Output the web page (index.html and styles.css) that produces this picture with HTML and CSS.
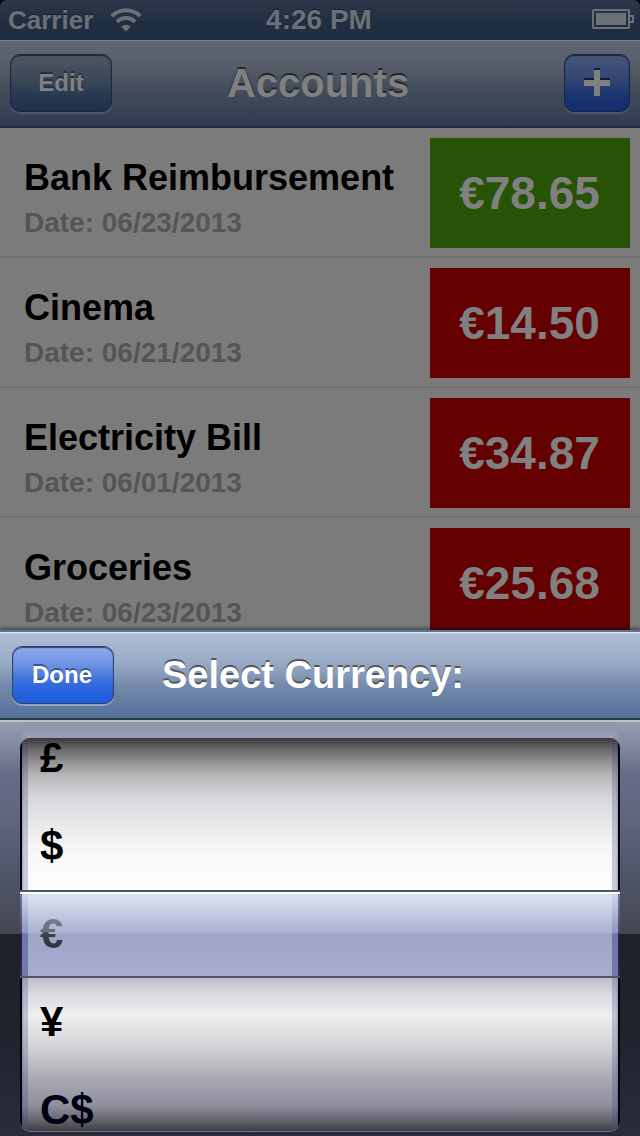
FILE: index.html
```html
<!DOCTYPE html>
<html lang="en">
<head>
    <meta charset="UTF-8">
    <meta name="viewport" content="width=device-width, initial-scale=1.0">
    <title>Accounts</title>
    <link rel="stylesheet" href="styles.css">
</head>
<body>
    <div class="screen">
        <div class="statusbar">
            <div class="carrier">
                <span>Carrier</span>
                <svg class="wifi" width="32" height="24" viewBox="0 0 32 24">
                    <path d="M1.8 8.2a20 20 0 0 1 28.4 0" fill="none" stroke="#6b7178" stroke-width="4"/>
                    <path d="M7 13.8a12.7 12.7 0 0 1 18 0" fill="none" stroke="#6b7178" stroke-width="4"/>
                    <path d="M16 23.5l-4.6-4.8a6.5 6.5 0 0 1 9.2 0z" fill="#6b7178"/>
                </svg>
            </div>
            <div class="time">4:26 PM</div>
            <svg class="battery" width="42" height="20" viewBox="0 0 42 20">
                <rect x="1" y="1" width="36" height="18" rx="1" fill="none" stroke="#6b7178" stroke-width="2"/>
                <rect x="4" y="4" width="30" height="12" fill="#6b7178"/>
                <path d="M38 7h3v6h-3" fill="none" stroke="#6b7178" stroke-width="2"/>
            </svg>
        </div>

        <div class="navbar">
            <button class="btn btn-edit">Edit</button>
            <h1>Accounts</h1>
            <button class="btn btn-add">
                <svg width="26" height="30" viewBox="0 0 26 30">
                    <path d="M10 0h6v10h10v6H16v10h-6V16H0v-6h10z" fill="#141c2c"/>
                    <path d="M10 2h6v10h10v6H16v10h-6V18H0v-6h10z" fill="#808080"/>
                </svg>
            </button>
        </div>

        <div class="list">
            <div class="row">
                <div class="info">
                    <div class="name">Bank Reimbursement</div>
                    <div class="date">Date: 06/23/2013</div>
                </div>
                <div class="amount income">€78.65</div>
            </div>
            <div class="row">
                <div class="info">
                    <div class="name">Cinema</div>
                    <div class="date">Date: 06/21/2013</div>
                </div>
                <div class="amount">€14.50</div>
            </div>
            <div class="row">
                <div class="info">
                    <div class="name">Electricity Bill</div>
                    <div class="date">Date: 06/01/2013</div>
                </div>
                <div class="amount">€34.87</div>
            </div>
            <div class="row">
                <div class="info">
                    <div class="name">Groceries</div>
                    <div class="date">Date: 06/23/2013</div>
                </div>
                <div class="amount">€25.68</div>
            </div>
        </div>
    </div>

    <div class="sheet">
        <div class="toolbar">
            <button class="btn btn-done">Done</button>
            <h2>Select Currency:</h2>
        </div>
        <div class="picker">
            <div class="wheel">
                <div class="item">£</div>
                <div class="item">$</div>
                <div class="item selected"><span>€</span></div>
                <div class="item">¥</div>
                <div class="item">C$</div>
            </div>
        </div>
    </div>
</body>
</html>
```
FILE: styles.css
```css
* {
    box-sizing: border-box;
}
body {
    margin: 0;
    width: 640px;
    height: 1136px;
    overflow: hidden;
    background: #000;
    font-family: "Liberation Sans", Arial, sans-serif;
    font-weight: bold;
}
h1, h2 {
    margin: 0;
}

/* dimmed screen behind the sheet */
.screen {
    height: 630px;
    overflow: hidden;
}
.statusbar {
    display: grid;
    grid-template-columns: 1fr auto 1fr;
    align-items: center;
    height: 40px;
    padding: 0 6px 0 8px;
    border-radius: 6px 6px 0 0;
    background: linear-gradient(#2b384a, #1f2d40 60%, #1f2e42);
    color: #6b7178;
    text-shadow: 0 -1px 0 #172231;
}
.carrier {
    display: flex;
    align-items: center;
    gap: 17px;
    font-size: 26px;
}
.time {
    padding-right: 4px;
    font-size: 28px;
    line-height: 40px;
}
.battery {
    justify-self: end;
    margin-bottom: 2px;
}
.navbar {
    display: flex;
    justify-content: space-between;
    align-items: flex-start;
    height: 88px;
    padding: 13px 10px 0;
    border-top: 1px solid #7b7e83;
    border-bottom: 2px solid #1e2b40;
    background: linear-gradient(#626872, #565d69 30%, #434d5b 55%, #2f3c50);
}
.navbar h1 {
    padding-right: 40px;
    margin-left: auto;
    margin-right: auto;
    font-size: 40px;
    line-height: 58px;
    color: #808080;
    text-shadow: 0 -2px 0 #20262f;
}
.btn {
    height: 58px;
    padding: 0;
    border: 1px solid #1e2735;
    border-radius: 10px;
    font: inherit;
    font-size: 24px;
}
.btn-edit {
    width: 102px;
    color: #808080;
    background: linear-gradient(#4e5662, #3a4758 45%, #263750 75%, #1e2f4b);
    text-shadow: 0 -2px 0 #252f3d;
    box-shadow: inset 0 1px 1px #1e2735, 0 2px 0 rgba(255,255,255,0.12);
}
.btn-add {
    display: flex;
    align-items: center;
    justify-content: center;
    width: 66px;
    border-color: #172442;
    background: linear-gradient(#485677, #304674 45%, #183371 75%, #112d70);
    box-shadow: inset 0 1px 1px #172442, 0 2px 0 rgba(255,255,255,0.12);
}

.list {
    background: #7b7b7b;
}
.row {
    display: flex;
    justify-content: space-between;
    height: 130px;
    padding: 10px 10px 0 24px;
    border-bottom: 2px solid #707070;
}
.name {
    padding-top: 19px;
    font-size: 36px;
    line-height: 42px;
    color: #000;
}
.date {
    margin-top: 8px;
    font-size: 28px;
    line-height: 32px;
    color: #555;
}
.amount {
    width: 200px;
    height: 110px;
    padding-right: 1px;
    font-size: 46px;
    line-height: 110px;
    text-align: center;
    color: #808080;
    background: #640000;
}
.income {
    background: #265306;
}

/* currency sheet */
.sheet {
    position: relative;
    height: 506px;
    box-shadow: 0 -1px 5px rgba(0,0,0,0.6);
}
.toolbar {
    display: flex;
    height: 90px;
    padding: 14px 12px 0;
    border-top: 2px solid #5a7598;
    border-bottom: 2px solid #2c3949;
    background: linear-gradient(#b0bfd6, #99abc5 35%, #7088a9 65%, #557097);
    box-shadow: inset 0 1px 0 #e0e6ee, inset 0 2px 0 #bccadc;
}
.toolbar h2 {
    margin-left: 48px;
    font-size: 38px;
    line-height: 59px;
    color: #fff;
    text-shadow: 0 -2px 0 #555;
}
.btn-done {
    width: 102px;
    padding-right: 2px;
    color: #fff;
    border-color: #2c4473;
    background: linear-gradient(#91aced, #6a8ee2 35%, #3c70dc 60%, #2360dc 85%, #2160dc);
    text-shadow: 0 -2px 0 #3356a0;
    box-shadow: inset 0 1px 1px #2c4473, 0 2px 0 #8fa3c2;
}
.picker {
    height: 416px;
    padding: 16px 20px 0;
    border-top: 2px solid #bcc2ca;
    background:
        linear-gradient(#9094a6, #9a9eb4 16px, transparent 16px) 22px 0 / 596px 100% no-repeat,
        linear-gradient(#969cab, #868da2 20px, #666d88 50px, #5e657c 100px, #4d5366 160px, #464650 212px, #1e202c 212px, #20222e 310px, #2b2c3b);
}

/* black edge, tinted rim and the shaded cylinder */
.wheel {
    display: flex;
    flex-direction: column;
    height: 394px;
    padding: 0 2px;
    overflow: hidden;
    border-radius: 10px;
    border-bottom: 1px solid #74747e;
    background:
        linear-gradient(#000, #000) 0 0 / 2px 100% no-repeat,
        linear-gradient(#000, #000) 100% 0 / 2px 100% no-repeat,
        linear-gradient(90deg, rgba(60,60,130,0.45), rgba(60,60,130,0.26) 2px) 2px 0 / 6px 100% no-repeat,
        linear-gradient(270deg, rgba(60,60,130,0.45), rgba(60,60,130,0.26) 2px) calc(100% - 2px) 0 / 6px 100% no-repeat,
        linear-gradient(#38383a, #68686a 11px, #929294 24px, #b8b8ba 38px, #d7d8db 60px, #e8e9eb 86px, #f8f8f8 115px, #fcfcfc 152px, #fcfcfc 238px, #c0bfca 240px, #dadadf 256px, #eeeff1 277px, #d2d2d5 310px, #acacb6 338px, #8e8e9e 368px, #66666f 382px, #3e3e46);
}
.item {
    flex: none;
    height: 88px;
    padding-left: 18px;
    font-size: 42px;
    line-height: 88px;
    color: #000;
}
/* the outer items roll past the edge of the wheel */
.item:first-child {
    height: 64px;
    line-height: 40px;
}
.item:last-child {
    height: 65px;
    padding-top: 23px;
    line-height: 42px;
    color: #000010;
}
.selected {
    margin: 0 -2px;
    padding-left: 20px;
    border-top: 2px solid #4c5567;
    border-bottom: 2px solid #4c586a;
    line-height: 84px;
    background:
        linear-gradient(#fff, #fff) 0 0 / 100% 2px no-repeat,
        linear-gradient(#717990, #484c5d 41px, #1e202c 42px, #2b2c3b) 0 0 / 2px 100% no-repeat,
        linear-gradient(#717990, #484c5d 41px, #1e202c 42px, #2b2c3b) 100% 0 / 2px 100% no-repeat,
        linear-gradient(#d4daed, #8e94c6 41px, #7074b0 42px, #7377b2) 2px 0 / 6px 100% no-repeat,
        linear-gradient(#d4daed, #8e94c6 41px, #7074b0 42px, #7377b2) calc(100% - 2px) 0 / 6px 100% no-repeat,
        linear-gradient(#dce3f0, #cdd4e7 16px, #b5bcd8 32px, #acb3d1 41px, #9fa5c5 42px, #a3a8ca 64px, #aaadd0);
}
.selected span {
    display: inline-block;
    background: linear-gradient(#7b828e 24px, #646b77 40px, #3c424e 41px, #292e3a 60px);
    -webkit-background-clip: text;
    background-clip: text;
    color: transparent;
}
```
